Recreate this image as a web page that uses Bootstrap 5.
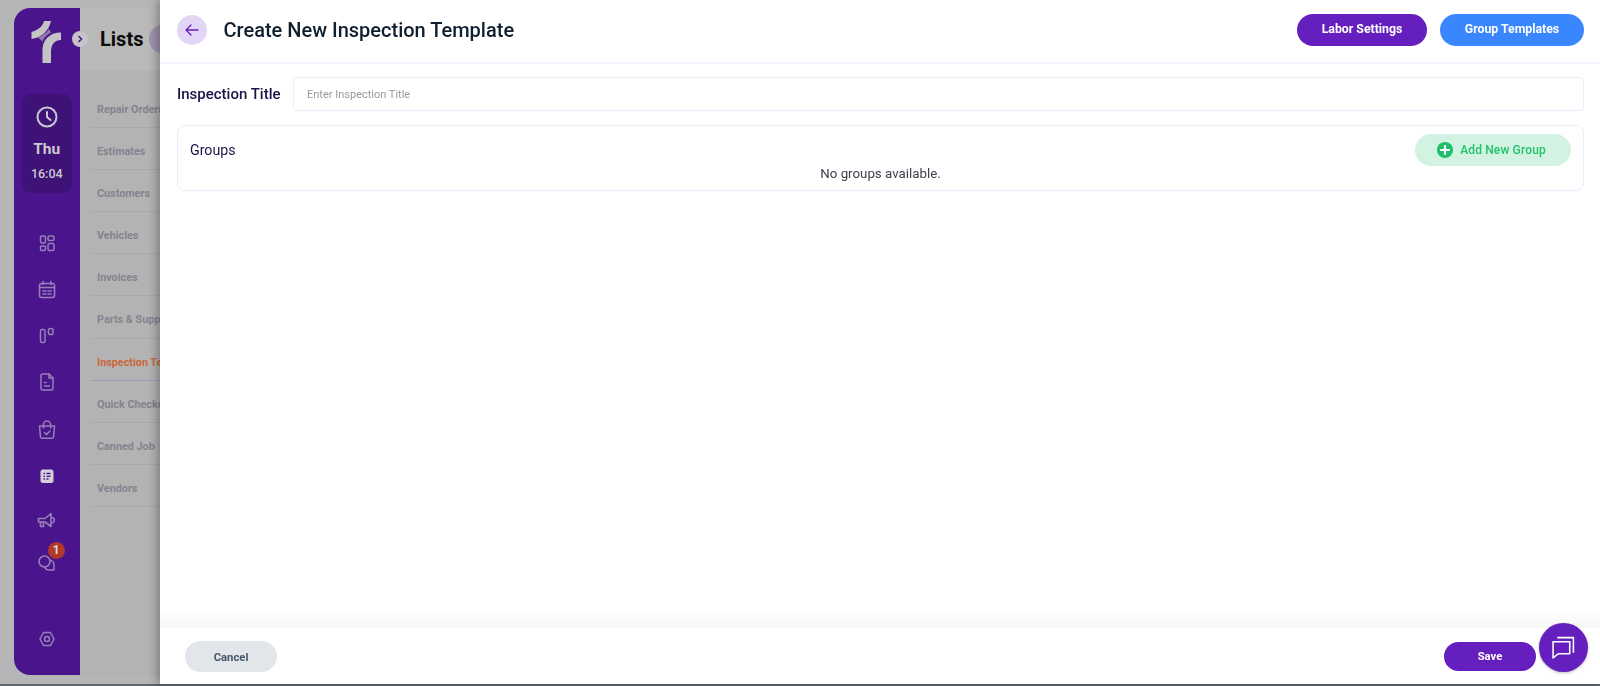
<!DOCTYPE html>
<html lang="en">
<head>
<meta charset="utf-8">
<title>Create New Inspection Template</title>
<link href="https://cdn.jsdelivr.net/npm/bootstrap@5.3.0/dist/css/bootstrap.min.css" rel="stylesheet">
<style>
html,body{height:686px;overflow:hidden;}
body{font-family:Roboto,"Liberation Sans",sans-serif;background:#b5b6b8;color:#1a1446;}
.app-shell{height:684px;padding:8px 0 9px 13.5px;background:#b5b6b8;}
.side-rail{width:66.5px;background:#4a148c;border-radius:16px 0 0 16px;position:relative;flex:none;}
.rail-logo{width:36px;height:46px;margin-top:11px;}
.clock-box{width:50px;height:99px;margin-top:29px;background:#3f1278;border-radius:9px;color:#c9c9cf;padding-top:10px;}
.clock-day{font-size:15.500px;font-weight:700;line-height:19px;margin-top:12px;}
.clock-time{font-size:12.500px;font-weight:500;line-height:14px;margin-top:8px;}
.rail-ic{width:20px;height:20px;color:#9780b8;display:block;}
.ic1{margin-top:40px;}
.ic2{margin-top:27px;}
.ic3{margin-top:26px;}
.ic4{margin-top:26px;}
.ic5{margin-top:28px;}
.ic6{margin-top:26px;}
.ic7{margin-top:25px;}
.ic8{margin-top:22px;}
.ic9{margin-top:56px;}
.msg-wrap{position:relative;width:20px;}
.msg-count{position:absolute;top:-11px;left:11px;width:17px;height:17px;border-radius:50%;background:#b03a2a;color:#e2d9d6;font-size:12px;font-weight:700;line-height:17px;text-align:center;}
.rail-toggle{position:absolute;top:23px;right:-8px;width:16px;height:16px;border-radius:50%;background:#c6c4c9;color:#4a148c;z-index:2;}
.lists-col{min-width:0;background:#b3b3b3;}
.lists-head{height:62px;background:#b9b9b9;}
.lists-title{font-size:20px;font-weight:700;color:#0c0c0c;margin-left:20px;}
.lists-pill{width:60px;height:30px;border-radius:15px;background:#a094ad;margin-left:6px;flex:none;}
.lists-menu{margin:16px 0 0 10px;}
.lists-menu div{height:42.100px;line-height:20px;padding:14px 0 0 7px;font-size:10.800px;font-weight:700;color:#84848f;border-bottom:1px solid #a9a9ad;white-space:nowrap;overflow:hidden;}
.lists-menu .now{color:#c9683a;border-bottom-color:#9aa0bf;}
.offcanvas.sheet{width:1440px;bottom:2px;border:0;box-shadow:-3px 0 9px rgba(0,0,0,.3);color:#1a1446;}
.sheet-head{height:64px;border-bottom:2px solid #f1f5fd;padding:0 16px 2px 17px;flex:none;}
.back-btn{width:30px;height:30px;border-radius:50%;background:#e3d5f6;color:#651fbf;border:0;padding:0;}
.sheet-title{font-size:20px;font-weight:500;color:#0f1f2e;margin:0 0 0 16.500px;line-height:30px;}
.pill-btn{height:32px;border-radius:16px;font-size:12.300px;font-weight:700;color:#fff;padding:0 0 2px;border:1px solid transparent;}
.pill-btn:hover{color:#fff;}
.btn-labor{width:130px;background:#651fbf;margin-right:13px;}
.btn-group-t{width:144px;background:#3a86ff;}
.sheet-body{padding:13px 16px 0 17px;}
.title-label{font-size:15px;font-weight:500;width:116px;flex:none;margin:0;}
.title-input{height:34px;font-size:11px;padding:0 13px;border:1px solid #e6effb;border-radius:4px;}
.title-input::placeholder{color:#9a9a9a;}
.groups-box{height:66px;margin-top:14px;border:1px solid #e6effb;border-radius:8px;padding:8px 12px 0 12px;}
.groups-label{font-size:14.200px;line-height:32px;}
.add-btn{width:156px;height:32px;background:#d3f3e2;color:#22c36b;border:0;border-radius:16px;font-size:12px;font-weight:500;letter-spacing:.15px;padding:0 3px 0 0;}
.add-btn:hover{background:#d3f3e2;color:#22c36b;}
.add-dot{width:16px;height:16px;margin-right:7px;}
.no-groups{font-size:13.300px;line-height:16px;color:#3a3f4a;}
.sheet-shade{height:20px;background:linear-gradient(#fff,#f8f8f8);flex:none;}
.sheet-foot{height:56px;padding:13px 64px 0 25px;flex:none;}
.foot-btn{width:92px;font-size:11.300px;font-weight:700;border:0;}
.btn-cancel{height:31px;border-radius:16px;background:#e2e6ea;color:#46566b;padding:3px 0 0;}
.btn-save{height:29px;margin-top:1px;border-radius:15px;background:#651fbf;color:#fff;padding:2px 0 0;}
.btn-save:hover{background:#651fbf;color:#fff;}
.chat-fab{position:fixed;left:1539px;top:623px;width:49px;height:49px;border-radius:50%;background:#651fbf;color:#fff;z-index:1060;box-shadow:0 1px 3px rgba(0,0,0,.25);}
.strip-foot{height:2px;background:#5f666d;}
</style>
</head>
<body>
<div class="app-shell d-flex">
  <aside class="side-rail d-flex flex-column align-items-center">
    <svg class="rail-logo" viewBox="0 0 36 46" fill="#c4c4c4"><path d="M15 2h7c-2 10-10 17-19.500 18v-7C9 11 14 7 15 2z"/><path d="M32 13.500V21c-6 0-10 4-10 12v11h-8.500V31c0-10 7-17.500 18.500-17.500z"/><path d="M9 18.500c5-2 9-5 11-8.500l2 3.500c-4 2-7 5-8.500 9z" fill="#8f7aa8"/></svg>
    <div class="clock-box text-center">
      <svg width="22" height="22" viewBox="0 0 22 22" fill="none" stroke="currentColor" stroke-width="2" stroke-linecap="round"><circle cx="11" cy="11" r="9.500"/><path d="M11 6v5l3.500 3"/></svg>
      <div class="clock-day">Thu</div>
      <div class="clock-time">16:04</div>
    </div>
    <svg class="rail-ic ic1" viewBox="0 0 20 20" fill="none" stroke="currentColor" stroke-width="1.500"><rect x="3.500" y="3" width="5" height="7" rx="1.500"/><rect x="11" y="3" width="6" height="4.500" rx="1.500"/><rect x="3.500" y="13" width="5" height="4.500" rx="1.500"/><rect x="11" y="10.500" width="6" height="7" rx="1.500"/></svg>
    <svg class="rail-ic ic2" viewBox="0 0 20 20" fill="none" stroke="currentColor" stroke-width="1.600" stroke-linecap="round"><rect x="2.500" y="3.500" width="15" height="14" rx="2"/><path d="M6 1.500v3M14 1.500v3M2.500 7.500h15M6 11h3M11 11h3M6 14h3M11 14h3"/></svg>
    <svg class="rail-ic ic3" viewBox="0 0 20 20" fill="none" stroke="currentColor" stroke-width="1.500"><rect x="3.500" y="3.500" width="4.500" height="13" rx="1.500"/><rect x="11.500" y="2.500" width="4.500" height="6" rx="1.800"/></svg>
    <svg class="rail-ic ic4" viewBox="0 0 20 20" fill="none" stroke="currentColor" stroke-width="1.500" stroke-linejoin="round" stroke-linecap="round"><path d="M4 3.500a1.500 1.500 0 0 1 1.500-1.500H12l4 4v10.500a1.500 1.500 0 0 1-1.500 1.500h-9A1.500 1.500 0 0 1 4 16.500z"/><path d="M12 2v4h4M7.500 10.500h1.500M7.500 14h5"/></svg>
    <svg class="rail-ic ic5" viewBox="0 0 20 20" fill="none" stroke="currentColor" stroke-width="1.500" stroke-linecap="round" stroke-linejoin="round"><path d="M2.500 6h15l-1 11a1.500 1.500 0 0 1-1.500 1.300H5a1.500 1.500 0 0 1-1.500-1.300z"/><path d="M6.500 8V4.500a3.500 3.500 0 0 1 7 0V8M7.500 12.500l2 2 3.500-3.500"/></svg>
    <svg class="rail-ic ic6" viewBox="0 0 20 20"><rect x="3.500" y="3.500" width="13" height="13.500" rx="2.500" fill="#d2d0d8"/><path d="M6.500 7.500h1.500M9.500 7.500h4M6.500 10.300h1.500M9.500 10.300h4M6.500 13h1.500M9.500 13h2" stroke="#4a148c" stroke-width="1.300" fill="none"/></svg>
    <svg class="rail-ic ic7" viewBox="0 0 20 20" fill="none" stroke="currentColor" stroke-width="1.600" stroke-linejoin="round" stroke-linecap="round"><path d="M1.500 7.500h6.500l6-5v13l-6-4.500H1.500z"/><path d="M3.500 11v4.500h3V11M15.500 6.500c2.500 1 2.500 4.500 0 5.500"/></svg>
    <div class="msg-wrap ic8">
      <svg class="rail-ic" viewBox="0 0 20 20" fill="none" stroke="currentColor" stroke-width="1.500" stroke-linejoin="round" stroke-linecap="round"><circle cx="7.500" cy="8.500" r="5.500"/><path d="M12.500 7a5 5 0 0 1 4.500 5v5h-5a5 5 0 0 1-4.500-3"/></svg>
      <span class="msg-count">1</span>
    </div>
    <svg class="rail-ic ic9" viewBox="0 0 20 20" fill="none" stroke="currentColor" stroke-width="1.500" stroke-linejoin="round"><path d="M6.500 3.500h7l3.500 6.500-3.500 6.500h-7L3 10z"/><circle cx="10" cy="10" r="2.500"/></svg>
    <span class="rail-toggle d-flex align-items-center justify-content-center"><svg width="8" height="8" viewBox="0 0 8 8" fill="none" stroke="currentColor" stroke-width="1.600" stroke-linecap="round" stroke-linejoin="round"><path d="M3 1.500L5.500 4 3 6.500"/></svg></span>
  </aside>
  <div class="lists-col flex-grow-1">
    <div class="lists-head d-flex align-items-center"><span class="lists-title">Lists</span><span class="lists-pill"></span></div>
    <div class="lists-menu">
      <div>Repair Orders</div><div>Estimates</div><div>Customers</div><div>Vehicles</div><div>Invoices</div><div>Parts &amp; Suppliers</div><div class="now">Inspection Templates</div><div>Quick Checkouts</div><div>Canned Job</div><div>Vendors</div>
    </div>
  </div>
</div>
<div class="strip-foot"></div>
<div class="offcanvas offcanvas-end show sheet d-flex flex-column" data-bs-backdrop="false" data-bs-scroll="true" tabindex="-1">
  <header class="sheet-head d-flex align-items-center">
    <button class="back-btn d-flex align-items-center justify-content-center" type="button" aria-label="Back"><svg width="14" height="12" viewBox="0 0 14 12" fill="none" stroke="currentColor" stroke-width="1.300" stroke-linecap="round" stroke-linejoin="round"><path d="M13 6H1M6 1L1 6l5 5"/></svg></button>
    <h1 class="sheet-title">Create New Inspection Template</h1>
    <button class="btn pill-btn btn-labor ms-auto" type="button">Labor Settings</button>
    <button class="btn pill-btn btn-group-t" type="button">Group Templates</button>
  </header>
  <div class="sheet-body flex-grow-1">
    <div class="d-flex align-items-center">
      <label class="title-label" for="title">Inspection Title</label>
      <input id="title" class="form-control title-input" type="text" placeholder="Enter Inspection Title">
    </div>
    <div class="groups-box">
      <div class="d-flex align-items-center justify-content-between">
        <span class="groups-label">Groups</span>
        <button class="btn add-btn d-flex align-items-center justify-content-center" type="button"><svg class="add-dot" viewBox="0 0 16 16"><circle cx="8" cy="8" r="8" fill="#1dbf68"/><path d="M8 4v8M4 8h8" stroke="#fff" stroke-width="2.200" stroke-linecap="round"/></svg>Add New Group</button>
      </div>
      <div class="no-groups text-center">No groups available.</div>
    </div>
  </div>
  <div class="sheet-shade"></div>
  <footer class="sheet-foot d-flex justify-content-between align-items-start">
    <button class="btn foot-btn btn-cancel" type="button">Cancel</button>
    <button class="btn foot-btn btn-save" type="button">Save</button>
  </footer>
</div>
<div class="chat-fab d-flex align-items-center justify-content-center"><svg width="25" height="25" viewBox="0 0 24 24" fill="none" stroke="currentColor" stroke-width="1.500" stroke-linejoin="round"><path d="M6 2.500h15.500V17"/><path d="M2 6.500h16V18H7l-5 4z"/></svg></div>
<script src="https://cdn.jsdelivr.net/npm/bootstrap@5.3.0/dist/js/bootstrap.bundle.min.js"></script>
</body>
</html>
